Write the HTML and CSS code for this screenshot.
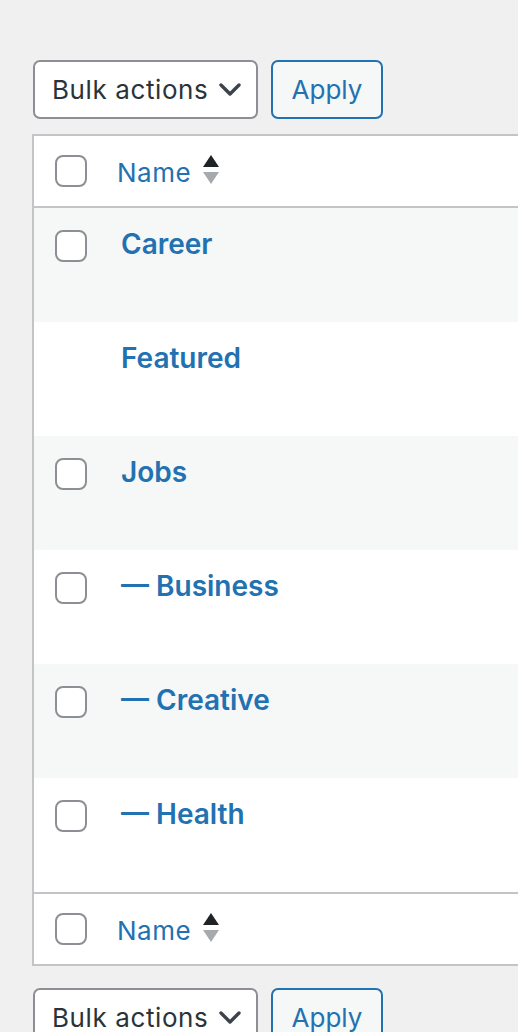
FILE: index.html
```html
<!DOCTYPE html>
<html>
<head>
<meta charset="utf-8">
<link rel="stylesheet" href="styles.css">
</head>
<body>
<div class="page">
  <div class="tablenav">
    <div class="select">
      <span>Bulk actions</span>
      <svg class="chev" width="22" height="14" viewBox="0 0 22 14"><polyline points="2,2 11,11 20,2" fill="none" stroke="#3c434a" stroke-width="3.4" stroke-linecap="round" stroke-linejoin="round"/></svg>
    </div>
    <button class="apply">Apply</button>
  </div>

  <div class="table">
    <div class="hrow head">
      <div class="check"><span class="cb"></span></div>
      <div class="hname"><a>Name</a>
        <span class="sort"><span class="up"></span><span class="down"></span></span>
      </div>
    </div>
    <div class="row alt"><div class="check"><span class="cb"></span></div><div class="title">Career</div></div>
    <div class="row"><div class="check"></div><div class="title">Featured</div></div>
    <div class="row alt"><div class="check"><span class="cb"></span></div><div class="title">Jobs</div></div>
    <div class="row"><div class="check"><span class="cb"></span></div><div class="title">— Business</div></div>
    <div class="row alt"><div class="check"><span class="cb"></span></div><div class="title">— Creative</div></div>
    <div class="row"><div class="check"><span class="cb"></span></div><div class="title">— Health</div></div>
    <div class="hrow foot">
      <div class="check"><span class="cb"></span></div>
      <div class="hname"><a>Name</a>
        <span class="sort"><span class="up"></span><span class="down"></span></span>
      </div>
    </div>
  </div>

  <div class="tablenav bottom">
    <div class="select">
      <span>Bulk actions</span>
      <svg class="chev" width="22" height="14" viewBox="0 0 22 14"><polyline points="2,2 11,11 20,2" fill="none" stroke="#3c434a" stroke-width="3.4" stroke-linecap="round" stroke-linejoin="round"/></svg>
    </div>
    <button class="apply">Apply</button>
  </div>
</div>
</body>
</html>
```

FILE: styles.css
```css
html, body {
  margin: 0;
  padding: 0;
  background: #f0f0f1;
  overflow: hidden;
  font-family: Inter, "Noto Sans", sans-serif;
}

.page {
  padding: 60px 0 0 32px;
}

.tablenav {
  display: flex;
  align-items: center;
  padding-left: 1px;
}

.tablenav.bottom {
  margin-top: 22px;
}

.select {
  box-sizing: border-box;
  width: 225px;
  height: 59px;
  border: 2px solid #8c8f94;
  border-radius: 7px;
  background: #fff;
  display: flex;
  align-items: center;
  justify-content: space-between;
  padding: 0 15px 0 17px;
  font-size: 26px;
  letter-spacing: 0.6px;
  color: #2c3338;
}

.apply {
  box-sizing: border-box;
  margin-left: 13px;
  width: 112px;
  height: 59px;
  border: 2px solid #2271b1;
  border-radius: 7px;
  background: #f6f7f7;
  color: #2271b1;
  font-family: inherit;
  font-size: 26px;
  padding: 0;
}

.table {
  margin-top: 15px;
  border: 2px solid #c3c4c7;
  border-right: none;
  background: #fff;
}

.hrow {
  height: 70px;
  display: flex;
  align-items: center;
}

.hrow.head {
  border-bottom: 2px solid #c3c4c7;
}

.hrow.foot {
  border-top: 2px solid #c3c4c7;
}

.check {
  width: 66px;
  flex: none;
  padding-left: 21px;
  box-sizing: border-box;
}

.cb {
  display: block;
  box-sizing: border-box;
  width: 32px;
  height: 32px;
  border: 2px solid #8c8f94;
  border-radius: 8px;
  background: #fff;
}

.hname {
  display: flex;
  align-items: center;
  padding-left: 17px;
  font-size: 26px;
  letter-spacing: 0.5px;
  color: #2271b1;
}

.hname a {
  padding-top: 2px;
}

.sort {
  display: flex;
  flex-direction: column;
  margin-left: 12px;
  gap: 5px;
  margin-top: -3px;
}

.up {
  width: 0;
  height: 0;
  border-left: 8px solid transparent;
  border-right: 8px solid transparent;
  border-bottom: 12px solid #1d2327;
}

.down {
  width: 0;
  height: 0;
  border-left: 8px solid transparent;
  border-right: 8px solid transparent;
  border-top: 12px solid #a7aaad;
}

.row {
  height: 114px;
  display: flex;
  align-items: flex-start;
  background: #fff;
}

.row.alt {
  background: #f6f7f7;
}

.row .check {
  padding-top: 22px;
}

.title {
  padding-top: 16px;
  padding-left: 21px;
  line-height: 40px;
  font-size: 28px;
  font-weight: 600;
  color: #2271b1;
}
```
